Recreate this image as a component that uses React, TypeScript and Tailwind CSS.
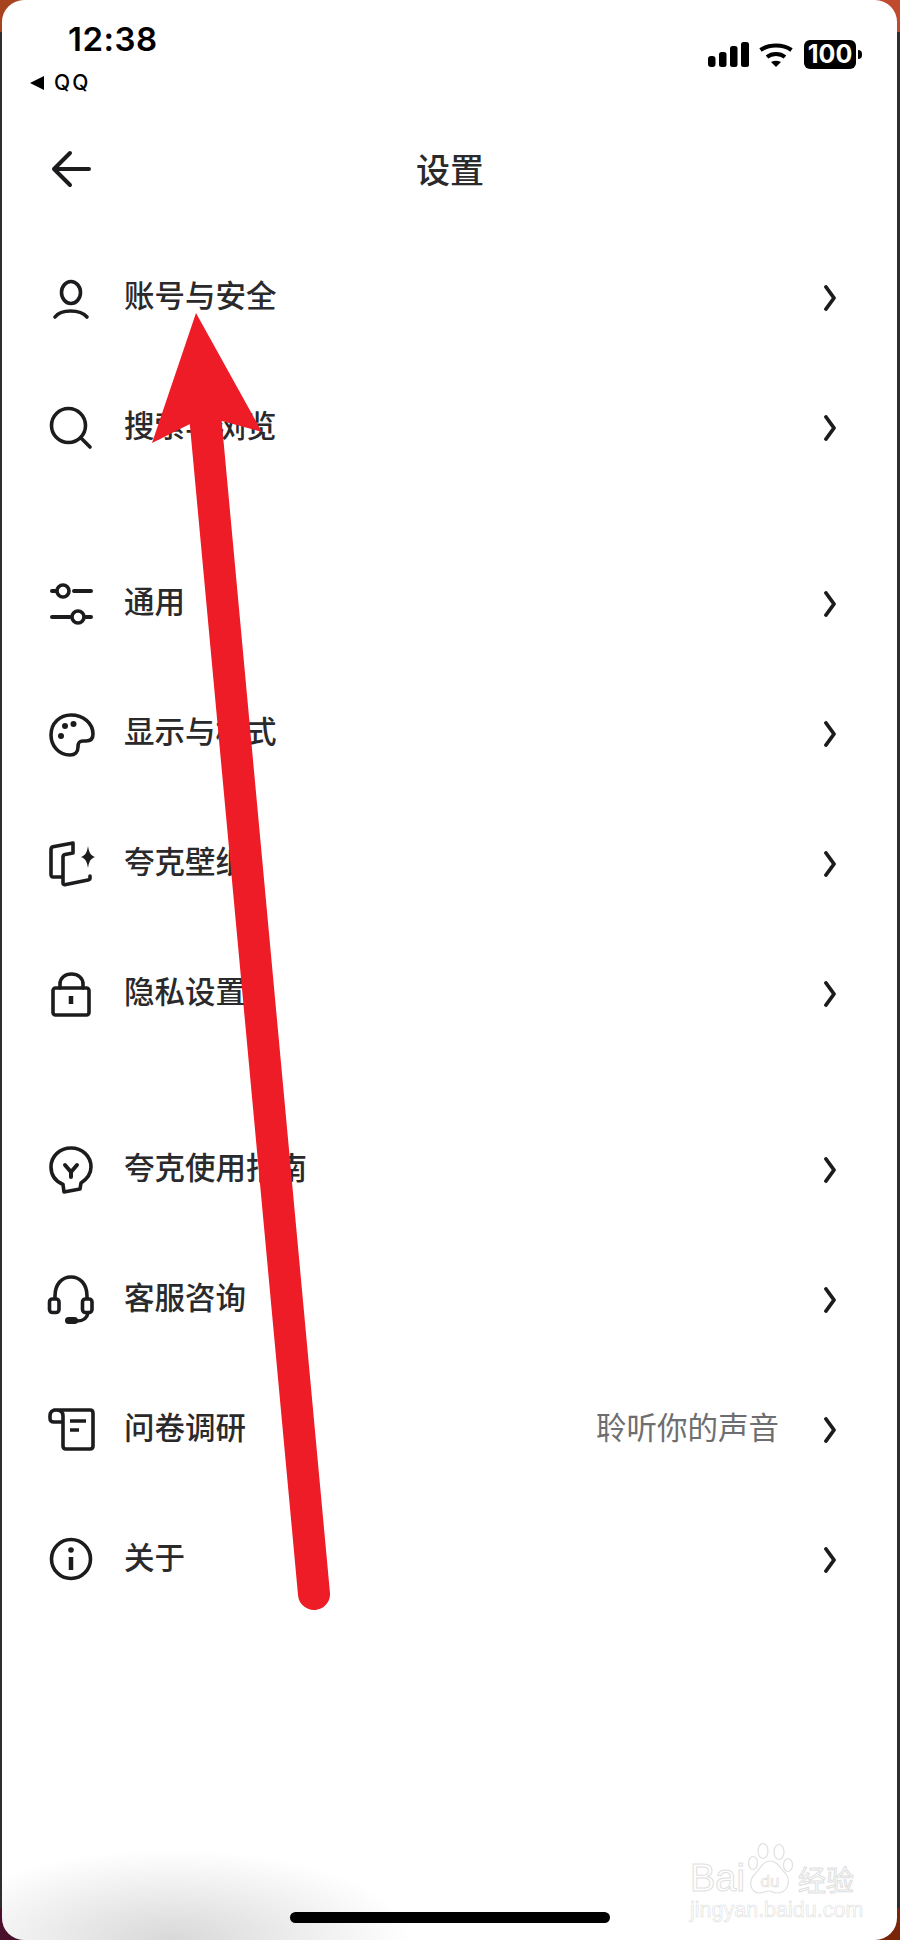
import type { ReactNode } from 'react';

const cjk = "font-['Noto_Sans_CJK_SC','Noto_Sans',sans-serif]";

function Icon({ children }: { children: ReactNode }) {
  return (
    <svg
      viewBox="0 0 48 48"
      className="w-12 h-12 shrink-0 overflow-visible text-[#1c1c1e]"
      fill="none"
      stroke="currentColor"
      strokeWidth="3.6"
      strokeLinecap="round"
      strokeLinejoin="round"
    >
      {children}
    </svg>
  );
}

const icons: { [key: string]: ReactNode } = {
  user: (
    <>
      <ellipse cx="25" cy="18.5" rx="9.5" ry="11" />
      <path d="M9 43 C15 35 34 35 41 43" />
    </>
  ),
  search: (
    <>
      <circle cx="22.5" cy="21.5" r="17" />
      <path d="M35 34 L44 43" />
    </>
  ),
  sliders: (
    <>
      <path d="M6 11 H10 M28 11 H45 M6 37 H24 M40 37 H45" strokeWidth="4" />
      <circle cx="17" cy="11" r="6" />
      <circle cx="32" cy="37" r="6" />
    </>
  ),
  palette: (
    <>
      <path d="M25 5 C37 5 47 13 47 24 C47 29 44 31 40 31 H37 C33 31 32 33 32 37 C32 42 29 45 24 45 C13 45 5 36 5 25 C5 13 14 5 25 5 Z" />
      <circle cx="19" cy="16" r="3" fill="currentColor" stroke="none" />
      <circle cx="27.500" cy="14" r="3" fill="currentColor" stroke="none" />
      <circle cx="15" cy="26" r="3" fill="currentColor" stroke="none" />
    </>
  ),
  wallpaper: (
    <>
      <path d="M17 37 H7 C5 37 5 36 5 34 V10 C5 8 5.500 7 7 6.700 L27 3 V13 L19 14.500 C18 14.700 17 16 17 17 V43 C17 44.500 18 45 20 44.500 L42 40 C43.500 39.700 44 39 44 38 V36" />
      <path d="M42 6 C43 12 44 15 49 17 C44 19 43 22 42 28 C41 22 40 19 35 17 C40 15 41 12 42 6 Z" fill="currentColor" stroke="none" />
    </>
  ),
  lock: (
    <>
      <rect x="7" y="18" width="36" height="27" rx="2.500" />
      <path d="M14 18 V14 C14 8 19 4 25.500 4 C32 4 37 8 37 14 V18" />
      <path d="M25 26 V34" strokeLinecap="butt" strokeWidth="4.500" />
    </>
  ),
  guide: (
    <>
      <path d="M17 38.500 C9 35 5 29 5 21 C5 10 14 2 25 2 C36 2 45 10 45 21 C45 28 41 33 35 37 L34 43 L18 46 Z" />
      <path d="M19 19 L25 26 L31 19 M25 26 V31" strokeWidth="4" />
    </>
  ),
  headset: (
    <>
      <path d="M9 22 V20 C9 8 16 1 25 1 C34 1 41 8 41 20 V22" />
      <rect x="3.500" y="23" width="9.500" height="13.500" rx="3" />
      <rect x="36.500" y="23" width="9.500" height="13.500" rx="3" />
      <path d="M42 37 C41 42 38 45 31 45" />
      <rect x="19" y="41" width="13" height="7" rx="3.500" fill="currentColor" stroke="none" />
    </>
  ),
  survey: (
    <>
      <path d="M8 4 H44 C46 4 47 5 47 7 V40 C47 42 46 43 44 43 H20 C18 43 17 42 17 40 V10 C17 6 14 4 10 4 C6 4 4 6 4 10 V12 C4 15 5 16 8 16 H17" />
      <path d="M24 15 H40 M24 24 H33" strokeLinecap="butt" />
    </>
  ),
  info: (
    <>
      <circle cx="25" cy="23" r="19.500" />
      <circle cx="25" cy="14" r="2.800" fill="currentColor" stroke="none" />
      <path d="M25 21 V34" strokeWidth="4.500" strokeLinecap="butt" />
    </>
  ),
};

function Row({ icon, label, note }: { icon: string; label: string; note?: string }) {
  return (
    <div className="h-[130px] flex items-center pl-[44px] pr-[61px]">
      <Icon>{icons[icon]}</Icon>
      <span className={`ml-[30px] pb-[6px] text-[30.5px] font-medium text-[#2a2a2c] ${cjk}`}>{label}</span>
      {note && <span className={`ml-auto pb-[6px] text-[30.5px] text-[#6e6e70] ${cjk}`}>{note}</span>}
      <svg viewBox="0 0 12 26" className={`w-[12px] h-[26px] ${note ? 'ml-[45px]' : 'ml-auto'}`} fill="none" stroke="#1c1c1e" strokeWidth="3.800" strokeLinecap="round" strokeLinejoin="round">
        <path d="M2 2 L10 13 L2 24" />
      </svg>
    </div>
  );
}

export default function App() {
  return (
    <div className="relative w-[900px] h-[1940px] bg-[#2e2e2e] overflow-hidden">
      {/* coloured wallpaper showing at the screen corners */}
      <div className="absolute left-0 top-0 w-8 h-8 bg-[#a8431f]" />
      <div className="absolute right-0 top-0 w-8 h-8 bg-[#c04a2e]" />
      <div className="absolute left-0 bottom-0 w-8 h-8 bg-[#4a0f2a]" />
      <div className="absolute right-0 bottom-0 w-8 h-8 bg-[#7a2408]" />

      <div className="relative h-full ml-[2px] mr-[3px] rounded-[22px] bg-white overflow-hidden">
        <div className="absolute left-0 bottom-0 w-[430px] h-[100px] bg-[radial-gradient(ellipse_240px_90px_at_170px_100%,#d8d8d8,#ffffff00)]" />

        {/* status bar */}
        <div className="h-[112px] relative">
          <div className="flex justify-between pl-[66px] pr-[35px] pt-[17px]">
            <span className="text-[33px] leading-[44px] font-semibold tracking-[0.5px] text-black font-['Inter',sans-serif]">12:38</span>
            <div className="flex items-center h-[30px] mt-[22px]">
              <svg viewBox="0 0 41 25" className="w-[41px] h-[25px]" fill="black">
                <rect x="0" y="14" width="7.500" height="11" rx="3" />
                <rect x="11" y="10" width="7.500" height="15" rx="2.500" />
                <rect x="22" y="4" width="7.500" height="21" rx="2.500" />
                <rect x="33" y="0" width="8" height="25" rx="2.500" />
              </svg>
              <svg viewBox="0 0 34 25" className="w-[34px] h-[25px] ml-[10px]" fill="none" stroke="black" strokeWidth="4">
                <path d="M1.500 8 C10 2 24 2 32.500 8" />
                <path d="M8 15 C13 11 21 11 26 15" />
                <path d="M12 20 Q17 17.500 22 20 L17 25 Z" fill="black" stroke="none" />
              </svg>
              <div className="w-[52px] h-[29px] ml-[11px] rounded-[6px] bg-black text-white text-[25px] leading-[29px] font-bold text-center font-['Inter',sans-serif]">100</div>
              <div className="w-[4px] h-[9px] rounded-r-full bg-black ml-[2px]" />
            </div>
          </div>
          <div className="flex items-center pl-[28px] mt-[2px] gap-[10px]">
            <svg viewBox="0 0 14 14" className="w-[14px] h-[14px]" fill="black"><path d="M0 7 L14 0 V14 Z" /></svg>
            <span className="text-[21px] leading-[24px] font-medium tracking-[2px] text-black font-['Inter',sans-serif]">QQ</span>
          </div>
        </div>

        {/* header */}
        <div className="h-[112px] flex items-center relative pl-[48px]">
          <svg viewBox="0 0 44 38" className="w-[44px] h-[38px] mt-[2px]" fill="none" stroke="#1c1c1e" strokeWidth="4" strokeLinecap="round" strokeLinejoin="round">
            <path d="M39 19 H4 M20 3 L4 19 L20 35" />
          </svg>
          <span className={`flex-1 text-center text-[34px] font-medium text-[#2a2a2c] pr-[91px] ${cjk}`}>设置</span>
        </div>

        <div className="mt-[9px]">
          <Row icon="user" label="账号与安全" />
          <Row icon="search" label="搜索与浏览" />
        </div>
        <div className="mt-[46px]">
          <Row icon="sliders" label="通用" />
          <Row icon="palette" label="显示与模式" />
          <Row icon="wallpaper" label="夸克壁纸" />
          <Row icon="lock" label="隐私设置" />
        </div>
        <div className="mt-[46px]">
          <Row icon="guide" label="夸克使用指南" />
          <Row icon="headset" label="客服咨询" />
          <Row icon="survey" label="问卷调研" note="聆听你的声音" />
          <Row icon="info" label="关于" />
        </div>

        {/* home bar */}
        <div className="absolute left-[288px] bottom-[17px] w-[320px] h-[11px] rounded-full bg-black" />

        {/* watermark */}
        <div className="absolute left-[688px] top-[1843px] w-[165px] leading-none text-transparent">
          <div className="flex items-end h-[54px]">
            <span className="text-[38px] leading-[38px] font-['Liberation_Sans',sans-serif] [-webkit-text-stroke:1px_#e0e0e0]">Bai</span>
            <svg viewBox="0 0 46 54" className="w-[46px] h-[54px] ml-[2px]" fill="white" stroke="#e0e0e0" strokeWidth="1.200">
              <ellipse cx="16" cy="8" rx="5" ry="7.500" />
              <ellipse cx="32" cy="9" rx="5" ry="7.500" />
              <ellipse cx="6" cy="20" rx="4.500" ry="6.500" />
              <ellipse cx="41" cy="22" rx="4.500" ry="6.500" />
              <path d="M23 18 C30 18 33 25 39 31 C44 38 41 50 30 50 C26 50 25 48 22 48 C18 48 17 50 13 50 C3 50 1 38 8 31 C14 25 16 18 23 18 Z" />
              <text x="23" y="44" textAnchor="middle" fontSize="17" fontFamily="Liberation Sans" fill="transparent" stroke="#e0e0e0" strokeWidth="0.700">du</text>
            </svg>
            <span className={`ml-[5px] mb-[3px] text-[28px] leading-[30px] [-webkit-text-stroke:1px_#e0e0e0] ${cjk}`}>经验</span>
          </div>
          <div className="text-[21.5px] leading-[24px] mt-[1px] font-['Liberation_Sans',sans-serif] [-webkit-text-stroke:0.6px_#e0e0e0] whitespace-nowrap">jingyan.baidu.com</div>
        </div>
      </div>

      {/* annotation arrow drawn over the page */}
      <svg viewBox="0 0 900 1940" className="absolute inset-0 w-[900px] h-[1940px] pointer-events-none">
        <path d="M196 313 L152 443 L190 424 L222 421 L262 432 Z" fill="#ee1c27" />
        <path d="M205.500 420 L314 1594" stroke="#ee1c27" strokeWidth="32" strokeLinecap="round" fill="none" />
      </svg>
    </div>
  );
}
